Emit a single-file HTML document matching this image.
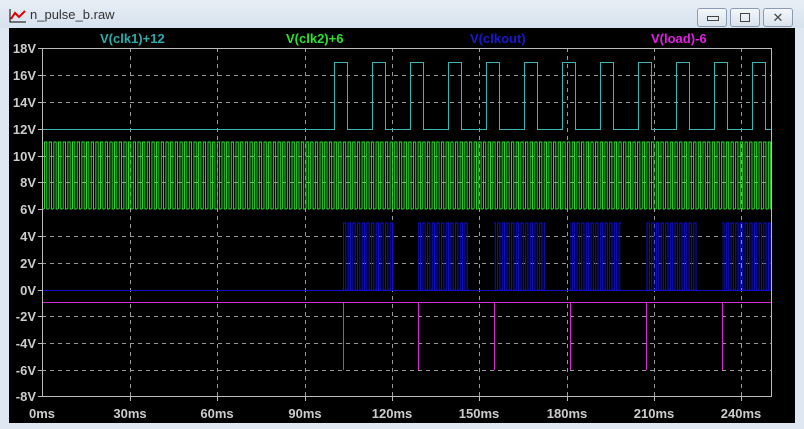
<!DOCTYPE html><html><head><style>
body{margin:0;width:804px;height:429px;overflow:hidden;background:#dfe8f2;font-family:"Liberation Sans",sans-serif}
.tb{position:absolute;left:0;top:0;width:804px;height:28px;background:linear-gradient(#e8eef6,#d6e2ee)}
.tt{position:absolute;left:30px;top:7px;font-size:13px;color:#333}
.bt{position:absolute;top:8px;width:28px;height:17px;border:1px solid #8a9ab0;border-radius:3px;background:linear-gradient(#f4f7fb,#d8e2ec)}
</style></head><body>
<div class="tb"></div>
<svg style="position:absolute;left:9px;top:8px" width="18" height="16"><path d="M1,1V14H17" stroke="#000" fill="none"/><path d="M2,11L6,5L10,9L16,3" stroke="#d00" stroke-width="2" fill="none"/></svg>
<div class="tt">n_pulse_b.raw</div>
<div class="bt" style="left:697px"><div style="position:absolute;left:9px;top:7px;width:10px;height:3px;border:1px solid #444"></div></div>
<div class="bt" style="left:730px"><div style="position:absolute;left:9px;top:4px;width:8px;height:7px;border:1px solid #444"></div></div>
<div class="bt" style="left:763px;text-align:center;font-size:13px;line-height:17px;color:#444">✕</div>
<svg style="position:absolute;left:0;top:0" width="804" height="429" font-family="Liberation Sans" font-weight="bold" font-size="13">
<defs>
<pattern id="g" patternUnits="userSpaceOnUse" x="44" y="0" width="4.67" height="429"><path d="M0.5,209V142H2.8V209H5" stroke="#2ee02e" stroke-width="1" fill="none"/></pattern>
<pattern id="b" patternUnits="userSpaceOnUse" x="343" y="0" width="4.67" height="429"><path d="M0.5,290V223H2.8V290H5" stroke="#1010c8" stroke-width="1" fill="none"/></pattern>
</defs>
<rect x="9" y="28" width="786" height="395" fill="#000"/>
<g stroke="#999" stroke-dasharray="4,4" stroke-width="1">
<path d="M130.5,48V396M217.5,48V396M305.5,48V396M392.5,48V396M479.5,48V396M567.5,48V396M654.5,48V396M741.5,48V396"/>
<path d="M42,75.5H771M42,102.5H771M42,156.5H771M42,182.5H771M42,236.5H771M42,263.5H771M42,316.5H771M42,343.5H771M42,370.5H771"/>
</g>
<path d="M42.5,396V48.5H771.5V396.5H42" stroke="#bbb" fill="none"/>
<g stroke="#bbb"><path d="M38,48.5H42M38,75.5H42M38,102.5H42M38,129.5H42M38,156.5H42M38,182.5H42M38,209.5H42M38,236.5H42M38,263.5H42M38,290.5H42M38,316.5H42M38,343.5H42M38,370.5H42M38,396.5H42M130.5,396V401M217.5,396V401M305.5,396V401M392.5,396V401M479.5,396V401M567.5,396V401M654.5,396V401M741.5,396V401"/></g>
<g fill="#ccc" font-size="13" text-anchor="end">
<text x="36" y="53">18V</text><text x="36" y="80">16V</text><text x="36" y="107">14V</text><text x="36" y="134">12V</text><text x="36" y="161">10V</text><text x="36" y="187">8V</text><text x="36" y="214">6V</text><text x="36" y="241">4V</text><text x="36" y="268">2V</text><text x="36" y="295">0V</text><text x="36" y="321">-2V</text><text x="36" y="348">-4V</text><text x="36" y="375">-6V</text><text x="36" y="401">-8V</text>
</g>
<g fill="#ccc" text-anchor="middle"><text x="42" y="418">0ms</text><text x="130" y="418">30ms</text><text x="217" y="418">60ms</text><text x="305" y="418">90ms</text><text x="392" y="418">120ms</text><text x="479" y="418">150ms</text><text x="567" y="418">180ms</text><text x="654" y="418">210ms</text><text x="741" y="418">240ms</text></g>
<text x="100" y="43" fill="#2eaaaa">V(clk1)+12</text>
<text x="286" y="43" fill="#2ee02e">V(clk2)+6</text>
<text x="470" y="43" fill="#1818d0">V(clkout)</text>
<text x="651" y="43" fill="#e020e0">V(load)-6</text>
<rect x="43" y="140" width="728" height="72" fill="url(#g)"/>
<path d="M43,129.5H334.5V62.5H347.5V129.5H372.5V62.5H385.5V129.5H410.5V62.5H423.5V129.5H448.5V62.5H461.5V129.5H486.5V62.5H499.5V129.5H524.5V62.5H537.5V129.5H562.5V62.5H575.5V129.5H600.5V62.5H613.5V129.5H638.5V62.5H651.5V129.5H676.5V62.5H689.5V129.5H714.5V62.5H727.5V129.5H752.5V62.5H765.5V129.5H771" stroke="#3cb4b4" fill="none"/>
<path d="M43,290.5H771" stroke="#1010c8"/>
<g fill="url(#b)"><rect x="342" y="221" width="51" height="71"/><rect x="418" y="221" width="51" height="71"/><rect x="494" y="221" width="51" height="71"/><rect x="570" y="221" width="51" height="71"/><rect x="646" y="221" width="51" height="71"/><rect x="722" y="221" width="49" height="71"/></g>
<path d="M43,302.5H771M343.5,302V370M418.5,302V370M494.5,302V370M570.5,302V370M646.5,302V370M722.5,302V370" stroke="#d030d0" fill="none"/>
</svg>
</body></html>
